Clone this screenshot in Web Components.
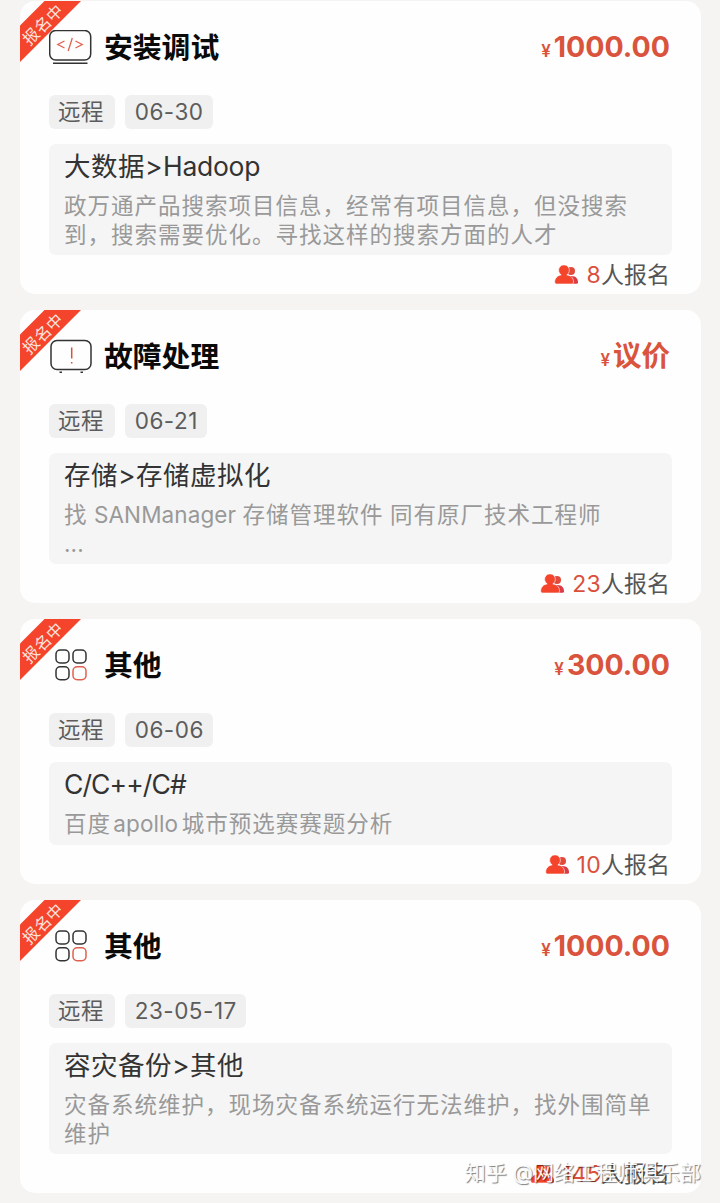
<!DOCTYPE html>
<html lang="zh-CN">
<head>
<meta charset="utf-8">
<title>项目列表</title>
<style>
  html, body {
    margin: 0;
    height: 1203px;
    overflow: hidden;
  }
  body {
    background: #f5f4f3;
    font-family: Inter, "Noto Sans CJK SC", sans-serif;
  }
</style>
</head>
<body>
<project-list></project-list>

<script>
const ICONS = {
  code: `
    <rect x="0.7" y="0.5" width="41" height="29.5" rx="6" stroke="#333"/>
    <path d="M4 33.3H38.5" stroke="#333"/>
    <path d="M15.5 11L8.8 14.5L15.5 18M26.5 11L33.2 14.5L26.5 18M23.3 8L19.2 21" stroke="#e0604f" stroke-width="1.3"/>`,
  fault: `
    <rect x="2" y="1.5" width="40" height="29" rx="6" stroke="#333"/>
    <path d="M10.5 33.2H13M31.5 33.2H34" stroke="#333"/>
    <path d="M22.7 8.5V19.5M22.7 23V24.6" stroke="#d9503c"/>`,
  other: `
    <rect x="7" y="2" width="13" height="13" rx="4.2" stroke="#333"/>
    <rect x="24" y="2" width="13" height="13" rx="4.2" stroke="#333"/>
    <rect x="7" y="18.7" width="13" height="13" rx="4.2" stroke="#333"/>
    <rect x="24" y="18.7" width="13" height="13" rx="4.2" stroke="#e0604f"/>`,
};

class KindIcon extends HTMLElement {
  constructor() {
    super();
    this.attachShadow({ mode: "open" });
  }

  connectedCallback() {
    this.shadowRoot.innerHTML = `
      <style>
      :host {
        display: block;
        width: 44px;
        height: 36px;
      }
      svg {
        display: block;
      }
      </style>
      <svg width="44" height="36" viewBox="0 0 44 36" fill="none" stroke-width="1.5">
        ${ICONS[this.getAttribute("kind")]}
      </svg>
    `;
  }
}

class StatusRibbon extends HTMLElement {
  constructor() {
    super();
    this.attachShadow({ mode: "open" });
    this.shadowRoot.innerHTML = `
      <style>
      :host {
        display: flex;
        align-items: center;
        justify-content: center;
        width: 61px;
        height: 61px;
        background: #f4452c;
        clip-path: polygon(24.5px 0, 61px 0, 0 61px, 0 24.5px);
        color: #ffe3dc;
        font-size: 16px;
        line-height: 20px;
        white-space: nowrap;
      }
      span {
        transform: translate(-8px, -7.5px) rotate(-45deg);
        letter-spacing: 0.6px;
      }
      </style>
      <span><slot></slot></span>
    `;
  }
}

class TagChip extends HTMLElement {
  constructor() {
    super();
    this.attachShadow({ mode: "open" });
    this.shadowRoot.innerHTML = `
      <style>
      :host {
        display: block;
        height: 34px;
        padding: 0 10.5px 0 9px;
        border-radius: 6px;
        background: #f0f0f0;
        color: #5c5c5c;
        font-size: 22.5px;
        line-height: 34px;
        letter-spacing: 0.6px;
        white-space: nowrap;
      }
      :host([date]) {
        padding: 0 9.5px 0 10px;
        letter-spacing: 0.5px;
      }
      </style>
      <slot></slot>
    `;
  }
}

class ApplyCount extends HTMLElement {
  constructor() {
    super();
    this.attachShadow({ mode: "open" });
    this.shadowRoot.innerHTML = `
      <style>
      :host {
        display: flex;
        align-items: center;
        justify-content: flex-end;
        height: 39px;
        padding-right: 2px;
        color: #555;
        font-size: 23px;
        line-height: 40px;
      }
      svg {
        margin-right: 7px;
      }
      .count {
        color: #d9503c;
        letter-spacing: 0.3px;
      }
      </style>
      <svg width="25" height="20" viewBox="0 0 25 20">
        <circle cx="17" cy="6" r="4" fill="#e24a3c"/>
        <path d="M13 18.8V11H17.5C22 11 24 14 24 17.2Q24 18.8 22.5 18.8Z" fill="#dc3b46"/>
        <path d="M0.7 17.2C0.7 12.7 3.8 10.4 7.2 9.9A5.4 5.4 0 1 1 12.8 9.9C16.5 10.4 19.6 12.7 19.6 17.2Q19.6 19 17.8 19H2.5Q0.7 19 0.7 17.2Z"
          fill="#f4452c" stroke="#fefefe" stroke-width="0.6"/>
      </svg>
      <span class="count"><slot></slot></span><span>人报名</span>
    `;
  }
}

class ProjectCard extends HTMLElement {
  constructor() {
    super();
    this.attachShadow({ mode: "open" });
  }

  set project(project) {
    this.shadowRoot.innerHTML = `
      <style>
      :host {
        display: block;
        position: relative;
        padding: 0 29px;
        border-radius: 15px;
        background: #fefefe;
      }
      status-ribbon {
        position: absolute;
        left: 0;
        top: 0;
      }
      .head {
        position: relative;
        display: flex;
        align-items: center;
        height: 94px;
        box-sizing: border-box;
      }
      kind-icon {
        margin: 0 11px 0 0;
      }
      h2 {
        flex: 1;
        margin: 0;
        color: #0a0a0a;
        font-size: 28.8px;
        font-weight: 700;
        line-height: 40px;
      }
      .price {
        display: flex;
        align-items: baseline;
        margin: 2px 2px 0 0;
        color: #d9533d;
        font-size: 28.5px;
        font-weight: 700;
        line-height: 40px;
      }
      .price small {
        margin-right: 3px;
        font-size: 17px;
        font-weight: 600;
      }
      .tags {
        display: flex;
        gap: 10px;
      }
      .box {
        box-sizing: border-box;
        min-height: 83px;
        margin-top: 15px;
        padding: 3px 15px 6.5px;
        border-radius: 7px;
        background: #f5f5f5;
      }
      h3 {
        margin: 0 0 5.5px;
        color: #333;
        font-size: 26.5px;
        font-weight: 400;
        line-height: 38px;
        letter-spacing: 0.5px;
      }
      h3 .latin {
        letter-spacing: -0.3px;
      }
      h3 .latin.tight {
        letter-spacing: -0.9px;
      }
      p {
        margin: 0;
        color: #999;
        font-size: 22.5px;
        line-height: 29px;
        letter-spacing: 1px;
        white-space: nowrap;
      }
      p .latin {
        letter-spacing: 0.1px;
      }
      p .latin.spaced {
        margin: 0 3.5px 0 2.3px;
      }
      </style>
      <status-ribbon>报名中</status-ribbon>
      <div class="head">
        <kind-icon kind="${project.kind}"></kind-icon>
        <h2>${project.title}</h2>
        <div class="price"><small>¥</small><span>${project.price}</span></div>
      </div>
      <div class="tags">
        <tag-chip>远程</tag-chip>
        <tag-chip date>${project.date}</tag-chip>
      </div>
      <div class="box">
        <h3>${project.subject}</h3>
        ${project.lines.map((line) => `<p>${line}</p>`).join("")}
      </div>
      <apply-count>${project.count}</apply-count>
    `;
  }
}

class ProjectList extends HTMLElement {
  constructor() {
    super();

    this.attachShadow({ mode: "open" });

    this.shadowRoot.innerHTML = `
      <style>
      :host {
        position: relative;
        display: block;
        height: 1203px;
        box-sizing: border-box;
        padding: 1px 19px 0 20px;
      }
      .cards {
        display: flex;
        flex-direction: column;
        gap: 16px;
      }
      .watermark {
        position: absolute;
        right: 19px;
        bottom: 15px;
        color: rgba(255, 255, 255, 0.95);
        font-size: 21px;
        line-height: 30px;
        text-shadow: 1px 1px 1px rgba(0, 0, 0, 0.5);
        white-space: nowrap;
      }
      </style>
      <div class="cards"></div>
      <div class="watermark">知乎 @网络工程师俱乐部</div>
    `;

    this.projects = [
      {
        kind: "code",
        title: "安装调试",
        price: "1000.00",
        date: "06-30",
        subject: `大数据&gt;<span class="latin">Hadoop</span>`,
        lines: [
          "政万通产品搜索项目信息，经常有项目信息，但没搜索",
          "到，搜索需要优化。寻找这样的搜索方面的人才",
        ],
        count: 8,
      },
      {
        kind: "fault",
        title: "故障处理",
        price: "议价",
        date: "06-21",
        subject: "存储&gt;存储虚拟化",
        lines: [
          `找<span class="latin"> SANManager </span>存储管理软件<span class="latin"> </span>同有原厂技术工程师`,
          `<span class="latin">...</span>`,
        ],
        count: 23,
      },
      {
        kind: "other",
        title: "其他",
        price: "300.00",
        date: "06-06",
        subject: `<span class="latin tight">C/C++/C#</span>`,
        lines: [`百度<span class="latin spaced">apollo</span>城市预选赛赛题分析`],
        count: 10,
      },
      {
        kind: "other",
        title: "其他",
        price: "1000.00",
        date: "23-05-17",
        subject: "容灾备份&gt;其他",
        lines: ["灾备系统维护，现场灾备系统运行无法维护，找外围简单", "维护"],
        count: 145,
      },
    ];
  }

  connectedCallback() {
    const cards = this.shadowRoot.querySelector(".cards");
    this.projects.forEach((project) => {
      const card = document.createElement("project-card");
      card.project = project;
      cards.appendChild(card);
    });
  }
}

customElements.define("kind-icon", KindIcon);
customElements.define("status-ribbon", StatusRibbon);
customElements.define("tag-chip", TagChip);
customElements.define("apply-count", ApplyCount);
customElements.define("project-card", ProjectCard);
customElements.define("project-list", ProjectList);
</script>
</body>
</html>
